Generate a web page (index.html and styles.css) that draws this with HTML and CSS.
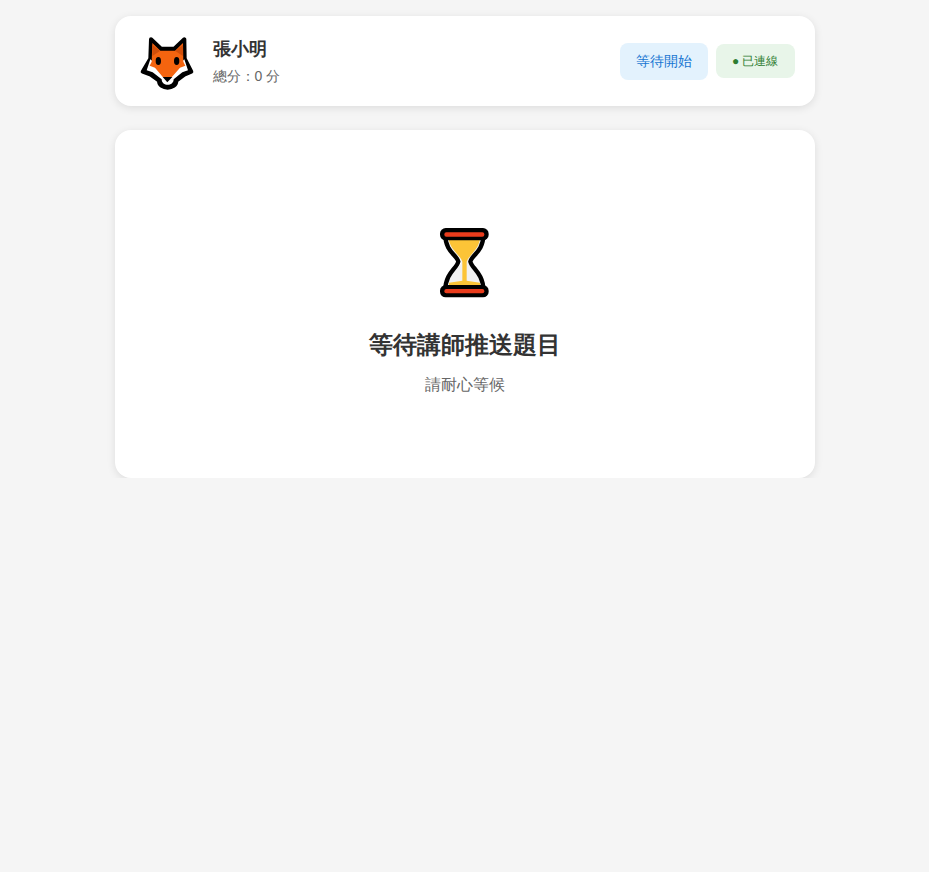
FILE: index.html
```html
<!DOCTYPE html>
<html lang="zh-Hant">
<head>
<meta charset="utf-8">
<title>等待講師推送題目</title>
<link rel="stylesheet" href="styles.css">
</head>
<body>
<main class="container">
  <header class="card header">
    <div class="player">
      <svg class="avatar" viewBox="36 33 180 180" aria-hidden="true">
        <path class="fox-line" d="M78 58 L108 86 L148 86 L178 58 L179 116 L199 155 L178 164 L154 182 C154 210 102 210 102 182 L77 164 L53 155 L76 116 Z"/>
        <path class="fox-white" d="M76 118 L65 151 L83 157 L110 178 C110 200 146 200 146 178 L172 157 L189 151 L178 118 L127 160 Z"/>
        <path class="fox-orange" d="M82 69 L106 92 L150 92 L174 69 L175 125 L181 137 L165 143 L140 172 L114 172 L90 143 L74 137 L80 125 Z"/>
        <path class="fox-dark" d="M82 74 L105 93 L82 108 Z M174 74 L151 93 L174 108 Z"/>
        <ellipse class="fox-black" cx="100" cy="123" rx="8" ry="12"/>
        <ellipse class="fox-black" cx="155" cy="123" rx="8" ry="12"/>
        <path class="fox-black" d="M113 171 L142 171 L127 187 Z"/>
      </svg>
      <div class="info">
        <div class="name">張小明</div>
        <div class="score">總分：0 分</div>
      </div>
    </div>
    <div class="badges">
      <span class="badge badge-wait">等待開始</span>
      <span class="badge badge-online">● 已連線</span>
    </div>
  </header>
  <section class="card waiting">
    <svg class="hourglass" viewBox="0 0 240 255" aria-hidden="true">
      <path class="glass-glass" d="M68 48 H168 C168 95 132 105 128 125 C132 145 168 160 168 208 H68 C68 160 106 145 110 125 C106 105 68 95 68 48 Z"/>
      <path class="glass-sand" d="M70 52 H166 C162 90 132 105 125 125 L125 182 L165 188 V196 H72 V188 L112 182 L112 125 C106 105 74 90 70 52 Z"/>
      <path class="glass-line" d="M61 45 C61 95 96 105 100 125 C96 145 61 160 61 210 M175 45 C175 95 140 105 136 125 C140 145 175 160 175 210"/>
      <rect class="glass-frame" x="45" y="24" width="146" height="37" rx="17"/>
      <rect class="glass-frame" x="45" y="195" width="146" height="37" rx="17"/>
      <rect class="glass-red" x="58" y="37" width="120" height="13" rx="6"/>
      <rect class="glass-red" x="58" y="207" width="120" height="13" rx="6"/>
    </svg>
    <h1 class="title">等待講師推送題目</h1>
    <p class="subtitle">請耐心等候</p>
  </section>
</main>
</body>
</html>
```
FILE: styles.css
```css
* { box-sizing: border-box; }
html, body { margin: 0; padding: 0; }
body {
  background: #f5f5f5;
  font-family: sans-serif;
  color: #333;
}
.container {
  width: 700px;
  margin: 0 auto;
  padding-top: 16px;
  display: flex;
  flex-direction: column;
  gap: 24px;
}
.card {
  background: #fff;
  border-radius: 16px;
  box-shadow: 0 2px 8px rgba(0, 0, 0, .1);
}
.header {
  height: 90px;
  padding: 0 20px 0 22px;
  display: flex;
  align-items: center;
  justify-content: space-between;
}
.player { display: flex; align-items: center; gap: 16px; }
.avatar { width: 60px; height: 60px; display: block; }
.info { display: flex; flex-direction: column; gap: 4px; }
.name { font-size: 18px; font-weight: 600; line-height: 26px; }
.score { font-size: 14px; color: #666; line-height: 20px; }
.badges { display: flex; align-items: center; gap: 8px; }
.badge { border-radius: 8px; display: block; }
.badge-wait {
  padding: 8px 16px;
  font-size: 14px;
  line-height: 21px;
  font-weight: 500;
  background: #e3f2fd;
  color: #1976d2;
}
.badge-online {
  padding: 8px 16px;
  font-size: 12px;
  line-height: 18px;
  font-weight: 500;
  background: #e8f5e9;
  color: #2e7d32;
}
.waiting {
  height: 348px;
  padding-top: 90px;
  display: flex;
  flex-direction: column;
  align-items: center;
}
.hourglass { width: 80px; height: 85px; display: block; }
.title { margin: 22px 0 0; font-size: 24px; font-weight: 600; line-height: 36px; }
.subtitle { margin: 10px 0 0; font-size: 16px; color: #666; line-height: 24px; }
.fox-line { fill: #000; stroke: #000; stroke-width: 12; stroke-linejoin: round; }
.fox-white { fill: #fff; }
.fox-orange { fill: #f4640f; }
.fox-dark { fill: #d24f0a; }
.fox-black { fill: #000; }
.glass-glass { fill: #f1f1f1; }
.glass-sand { fill: #fcc437; }
.glass-line { fill: none; stroke: #000; stroke-width: 13; }
.glass-frame { fill: #000; }
.glass-red { fill: #ea3c1c; }
```
